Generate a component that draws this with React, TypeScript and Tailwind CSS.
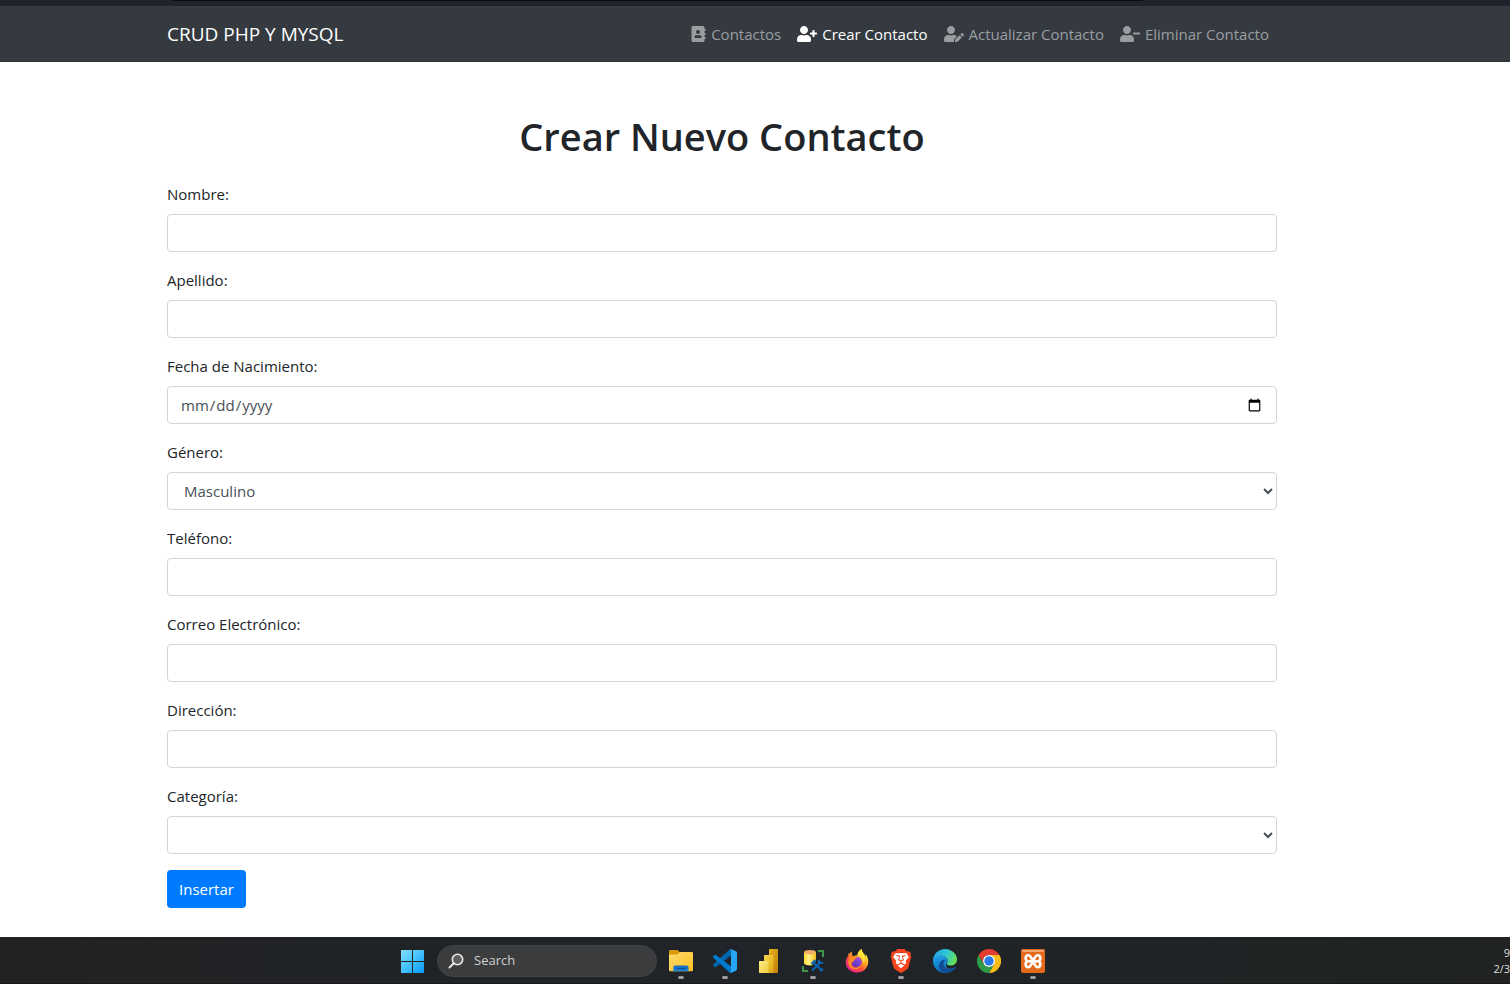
import type { ReactNode } from "react";
import { FaAddressBook, FaUserEdit, FaUserMinus, FaUserPlus } from "react-icons/fa";
import { SiBrave } from "react-icons/si";

const field =
  "block h-[38px] w-full rounded border border-[#ced4da] bg-white px-3 py-1.5 text-[15px] leading-6 text-[#495057] outline-none focus:border-[#80bdff]";

function NavItem({ icon, label, active = false }: { icon: ReactNode; label: string; active?: boolean }) {
  return (
    <a
      href="#"
      className={`flex items-center gap-[5px] whitespace-nowrap px-2 py-2 text-[15px] leading-6 ${
        active ? "text-white" : "text-[#9a9da0]"
      }`}
    >
      {icon}
      {label}
    </a>
  );
}

function Field({ id, label, children }: { id: string; label: string; children: ReactNode }) {
  return (
    <div className="mb-4">
      <label htmlFor={id} className="mb-2 block text-[15px] leading-6">
        {label}
      </label>
      {children}
    </div>
  );
}

function Task({ label, running = false, children }: { label: string; running?: boolean; children: ReactNode }) {
  return (
    <button type="button" aria-label={label} className="relative flex h-full w-11 items-center justify-center">
      {children}
      {running && <span className="absolute bottom-1 h-[3px] w-1.5 rounded-full bg-[#9c9c9c]" />}
    </button>
  );
}

function WindowsIcon() {
  return (
    <svg viewBox="0 0 23 23" className="size-[23px]">
      <defs>
        <linearGradient id="win" gradientUnits="userSpaceOnUse" x1="0" y1="0" x2="23" y2="23">
          <stop offset="0" stopColor="#83dfff" />
          <stop offset=".5" stopColor="#43c2fb" />
          <stop offset="1" stopColor="#0898fb" />
        </linearGradient>
      </defs>
      <path fill="url(#win)" d="M0 0h11v11H0zM12 0h11v11H12zM0 12h11v11H0zM12 12h11v11H12z" />
    </svg>
  );
}

function FolderIcon() {
  return (
    <svg viewBox="0 0 24 24" className="size-6">
      <defs>
        <linearGradient id="folder" x1="0" y1="0" x2="1" y2="1">
          <stop offset="0" stopColor="#ffdc70" />
          <stop offset="1" stopColor="#fdbf22" />
        </linearGradient>
        <linearGradient id="tray" x1="0" y1="0" x2="0" y2="1">
          <stop offset="0" stopColor="#0f6cbd" />
          <stop offset="1" stopColor="#1c87da" />
        </linearGradient>
      </defs>
      <path fill="#d99a06" d="M0 6V2.2Q0 1 1.2 1h7.2q.6 0 1 .5L11 4v3H0z" />
      <path fill="url(#folder)" d="M0 5.4h7.6q.8 0 1.3-.5L10.3 3.4Q10.7 3 11.4 3H22.8q1.2 0 1.2 1.2V21q0 1.2-1.2 1.2H1.2Q0 22.2 0 21z" />
      <path fill="url(#tray)" d="M4.3 22.2v-3.7q0-2 2-2h11.2q2 0 2 2v3.7z" />
      <path fill="#0b4f94" d="M7.5 19h9v1.200h-9z" />
    </svg>
  );
}

function CodeIcon() {
  return (
    <svg viewBox="0 0 128 128" className="size-6">
      <path fill="#0065a9" d="M123.471 13.820L97.097 1.120A7.973 7.973 0 0 0 88 2.668L1.662 81.387a5.333 5.333 0 0 0 .006 7.887l7.052 6.411a5.333 5.333 0 0 0 6.811.303l103.971-78.875c3.488-2.646 8.498-.158 8.498 4.220v-.306a8.001 8.001 0 0 0-4.529-7.208z" />
      <path fill="#007acc" d="M123.471 114.181l-26.374 12.698A7.973 7.973 0 0 1 88 125.333L1.662 46.613a5.333 5.333 0 0 1 .006-7.887l7.052-6.411a5.333 5.333 0 0 1 6.811-.303l103.971 78.874c3.488 2.647 8.498.159 8.498-4.219v.306a8.001 8.001 0 0 1-4.529 7.208z" />
      <path fill="#27a5f3" d="M97.098 126.882A7.977 7.977 0 0 1 88 125.333c2.952 2.952 8 .861 8-3.314V5.980c0-4.175-5.048-6.266-8-3.313a7.977 7.977 0 0 1 9.098-1.549L123.467 13.800A8 8 0 0 1 128 21.010v85.982a8 8 0 0 1-4.533 7.210l-26.369 12.681z" />
    </svg>
  );
}

function ChartIcon() {
  return (
    <svg viewBox="0 0 24 24" className="size-6">
      <defs>
        <linearGradient id="barA" x1="0" y1="0" x2="1" y2="1">
          <stop offset="0" stopColor="#e8b41c" />
          <stop offset="1" stopColor="#c37d0a" />
        </linearGradient>
        <linearGradient id="barB" x1="0" y1="0" x2="1" y2="1">
          <stop offset="0" stopColor="#f8da4a" />
          <stop offset="1" stopColor="#dfa515" />
        </linearGradient>
        <linearGradient id="barC" x1="0" y1="0" x2="1" y2="1">
          <stop offset="0" stopColor="#fceb85" />
          <stop offset="1" stopColor="#f2cc3d" />
        </linearGradient>
      </defs>
      <rect x="12" y="0" width="9" height="24" rx=".6" fill="url(#barA)" />
      <path fill="url(#barB)" d="M7 6.600q0-.6.600-.6h8.200q.6 0 .6.600V24H7z" />
      <path fill="url(#barC)" d="M2 12.600q0-.6.600-.6h8.200q.6 0 .6.600V24h-8.800Q2 24 2 23.400z" />
    </svg>
  );
}

function DatabaseIcon() {
  return (
    <svg viewBox="0 0 24 24" className="size-6">
      <defs>
        <linearGradient id="cyl" x1="0" y1="0" x2="1" y2="0">
          <stop offset="0" stopColor="#ffd92e" />
          <stop offset=".4" stopColor="#fff08a" />
          <stop offset="1" stopColor="#f3bd16" />
        </linearGradient>
      </defs>
      <path fill="none" stroke="#3f9548" strokeWidth="2" d="M17 2h5v6M2 17v5h5" />
      <path fill="url(#cyl)" d="M3 3v11c0 3.200 12 3.200 12 0V3z" />
      <ellipse cx="9" cy="3.200" rx="6" ry="2.300" fill="#f0ad63" />
      <path stroke="#222423" strokeWidth="4" d="m12 13 9 9M20 13l-8 9" />
      <path stroke="#0c66b4" strokeWidth="2" d="m12 13 9 8.500M20 13l-9 8.500" />
      <path fill="none" stroke="#0c66b4" strokeWidth="2.200" d="m10.500 15 4-4M18 11v3h4M19 22l3-2" />
    </svg>
  );
}

function FirefoxIcon() {
  return (
    <svg viewBox="0 0 24 24" className="size-6">
      <defs>
        <linearGradient id="fox" x1=".85" y1=".1" x2=".2" y2=".95">
          <stop offset="0" stopColor="#fff44f" />
          <stop offset=".35" stopColor="#ffad20" />
          <stop offset=".65" stopColor="#ff4a3d" />
          <stop offset="1" stopColor="#e81b95" />
        </linearGradient>
        <linearGradient id="globe" x1=".8" y1="0" x2=".2" y2="1">
          <stop offset="0" stopColor="#a24be8" />
          <stop offset="1" stopColor="#5831b5" />
        </linearGradient>
      </defs>
      <path fill="url(#fox)" d="M3.300 3.500C2.900 4.600 3 5.800 3.400 6.800 1.600 8.800.7 11 .7 13.200.7 19.200 5.600 23.600 12 23.600s11.300-4.600 11.300-11c0-3.300-1.300-6-3.200-7.500.5 1 .7 2 .8 2.800C19.500 4.800 17 3.500 16.500 0c-2.800 1.600-4 4.300-4 6.200-1.500 0-3 .4-4 1.200C6.200 6.200 6.500 4 7.200 2.500 5.600 3.200 4.600 4.400 4 5.200 3.500 4.800 3.300 4.200 3.300 3.500z" />
      <circle cx="11.500" cy="13" r="5.300" fill="url(#globe)" />
      <path fill="#ff8b22" d="M5.100 7.200c1.500-.6 3.100-.3 4.300.5.800.5 1.500.5 2.700.5-.2 1.300-1.500 2-3 2.500.2 1.700-1.400 2-2.500 3.300-.6 3.200 2 5.300 5 4.800 2.800-.4 4.800-2.800 5-5.500.6 4-2.400 7.300-6.300 7.300-4.400 0-7.300-3.600-6.900-8 .2-2.200.7-4 1.700-5.400z" />
      <path fill="#ffe43b" d="M16.500 0c-2.800 1.600-4 4.300-4 6.200 3.500.2 6.300 3.600 5.300 8 2.400-1.400 3-5.400 1-8.500C17.700 4 16.800 2.500 16.500 0z" />
    </svg>
  );
}

function EdgeIcon() {
  return (
    <svg viewBox="0 0 24 24" className="size-6">
      <defs>
        <linearGradient id="edgeTop" x1="0" y1=".3" x2="1" y2=".6">
          <stop offset="0" stopColor="#259fe5" />
          <stop offset=".5" stopColor="#2fc6d3" />
          <stop offset="1" stopColor="#69e34f" />
        </linearGradient>
        <linearGradient id="edgeLeft" x1="0" y1="0" x2=".3" y2="1">
          <stop offset="0" stopColor="#22a5e5" />
          <stop offset="1" stopColor="#096cc0" />
        </linearGradient>
      </defs>
      <path fill="url(#edgeLeft)" d="M0 12C0 8.500 3 6.500 7 6.500c5 0 8 3 7.500 6.500 0 0-2 1-1.500 3.500 1 4 5.500 4 9.500 1.500.4-.2.700.1.500.5C20.600 22 16.500 24 12 24 5.400 24 0 18.600 0 12z" />
      <path fill="#104c91" d="M8.900 22.600C5.800 20.700 5 16.500 7 13.500c1.200-1.900 3.300-3 5.500-2.600-1.400.8-2 2-2 3.500 0 3.200 3.300 5.600 7 5.600 1.800 0 3.500-.8 5-2 .3-.2.700.1.500.5-3 4.500-8.500 6.700-14.100 4.100z" />
      <path fill="url(#edgeTop)" d="M0 11.800C.2 5 5.400 0 12 0c7 0 12 5.200 12 10.500 0 3.600-2.600 6-6 6-2.600 0-4.400-.8-4.400-1.800 0-.7 1.100-1 1.100-3C14.700 9 11.500 6.700 7.700 6.700 3.900 6.700 1 8.800 0 11.800z" />
    </svg>
  );
}

function ChromeIcon() {
  return (
    <svg viewBox="0 0 24 24" className="size-6">
      <path fill="#fbbc1a" d="M12 6h10.400A12 12 0 0 1 12 24l5.200-9z" />
      <path fill="#2d9b48" d="M1.600 6 6.800 15A6 6 0 0 0 17.200 15L12 24A12 12 0 0 1 1.600 6z" />
      <path fill="#e33b2e" d="M1.600 6a12 12 0 0 1 20.800 0H12a6 6 0 0 0-5.200 9z" />
      <circle cx="12" cy="12" r="6" fill="#fff" />
      <circle cx="12" cy="12" r="4.700" fill="#2878ea" />
    </svg>
  );
}

function BraveIcon() {
  return (
    <span className="relative flex size-6 items-center justify-center">
      <svg viewBox="0 0 24 24" className="absolute size-6">
        <path fill="#fff" d="M6 4h12l2 4-3 12-5 3-5-3L4 8z" />
      </svg>
      <SiBrave className="relative size-6 text-[#f4431d]" />
    </span>
  );
}

function XamppIcon() {
  return (
    <svg viewBox="0 0 24 24" className="size-6">
      <rect width="24" height="24" rx="2" fill="#e5691c" />
      <rect x="1" y="1" width="22" height="2" rx="1" fill="#f3a571" />
      <path
        fill="none"
        stroke="#fff"
        strokeWidth="2.600"
        strokeLinecap="round"
        strokeLinejoin="round"
        d="M6.500 12.200C3.800 11 4 6.200 7.400 6.200c3 0 2 4 4.600 4s1.600-4 4.600-4c3.400 0 3.600 4.800.9 6 2.700 1.200 2.500 6-.9 6-3 0-2-4-4.600-4s-1.600 4-4.600 4c-3.400 0-3.600-4.800-.9-6z"
      />
      <path stroke="#fff" strokeWidth="3" strokeLinecap="round" d="M8.500 12.200h7" />
    </svg>
  );
}

export default function App() {
  return (
    <div className="flex min-h-screen flex-col overflow-x-hidden bg-white font-['Open_Sans','Noto_Sans',sans-serif] text-[#212529]">
      <div className="h-1.5 bg-[#20232b] pr-[367px] pl-[173px]">
        <div className="h-px bg-[#090a0e]" />
      </div>
      <header className="border-b border-[#2e3237] bg-[#343a40] pr-[233px] pl-[167px]">
        <nav className="flex h-[55px] items-center justify-between">
          <a href="#" className="text-[19px] leading-[30px] whitespace-nowrap text-white">
            CRUD PHP Y MYSQL
          </a>
          <div className="flex">
            <NavItem icon={<FaAddressBook className="h-4 w-[15px]" />} label="Contactos" />
            <NavItem icon={<FaUserPlus className="h-4 w-5" />} label="Crear Contacto" active />
            <NavItem icon={<FaUserEdit className="h-4 w-5" />} label="Actualizar Contacto" />
            <NavItem icon={<FaUserMinus className="h-4 w-5" />} label="Eliminar Contacto" />
          </div>
        </nav>
      </header>

      <main className="pt-[50px] pr-[233px] pb-7 pl-[167px]">
        <h1 className="mb-[22px] text-center text-[38px] leading-12 font-semibold">Crear Nuevo Contacto</h1>
        <form onSubmit={(event) => event.preventDefault()}>
          <Field id="nombre" label="Nombre:">
            <input id="nombre" type="text" className={field} />
          </Field>
          <Field id="apellido" label="Apellido:">
            <input id="apellido" type="text" className={field} />
          </Field>
          <Field id="fecha" label="Fecha de Nacimiento:">
            <input id="fecha" type="date" className={field} />
          </Field>
          <Field id="genero" label="Género:">
            <select id="genero" className={field}>
              <option>Masculino</option>
              <option>Femenino</option>
            </select>
          </Field>
          <Field id="telefono" label="Teléfono:">
            <input id="telefono" type="tel" className={field} />
          </Field>
          <Field id="correo" label="Correo Electrónico:">
            <input id="correo" type="email" className={field} />
          </Field>
          <Field id="direccion" label="Dirección:">
            <input id="direccion" type="text" className={field} />
          </Field>
          <Field id="categoria" label="Categoría:">
            <select id="categoria" className={field} />
          </Field>
          <button type="submit" className="h-[38px] rounded bg-[#007bff] px-3 text-[15px] leading-6 text-white">
            Insertar
          </button>
        </form>
      </main>

      <footer className="mt-auto flex h-[47px] items-center border-b border-[#1b1718] bg-linear-to-r from-[#212223] via-[#202429] to-[#202322] pt-0.5 pl-[401px]">
        <button type="button" aria-label="Inicio">
          <WindowsIcon />
        </button>
        <label className="mr-0.5 ml-[13px] flex h-8 w-[220px] shrink-0 items-center gap-2.5 rounded-full border border-[#404244] bg-[#3a3c3e] px-2.5">
          <svg viewBox="0 0 16 16" className="size-4 shrink-0">
            <circle cx="9.500" cy="6.500" r="5.200" fill="#5b5d5f" stroke="#e6e6e6" strokeWidth="1.600" />
            <path stroke="#e6e6e6" strokeWidth="2" strokeLinecap="round" d="M5.500 10.500 1.500 14.500" />
          </svg>
          <input
            type="search"
            aria-label="Search"
            placeholder="Search"
            className="w-full min-w-0 bg-transparent text-[13px] text-white outline-none placeholder:text-[#cfcfcf]"
          />
        </label>
        <Task label="Explorador de archivos" running>
          <FolderIcon />
        </Task>
        <Task label="Visual Studio Code" running>
          <CodeIcon />
        </Task>
        <Task label="Power BI">
          <ChartIcon />
        </Task>
        <Task label="Base de datos" running>
          <DatabaseIcon />
        </Task>
        <Task label="Firefox">
          <FirefoxIcon />
        </Task>
        <Task label="Brave" running>
          <BraveIcon />
        </Task>
        <Task label="Edge">
          <EdgeIcon />
        </Task>
        <Task label="Chrome">
          <ChromeIcon />
        </Task>
        <Task label="XAMPP" running>
          <XamppIcon />
        </Task>
        <div className="ml-auto text-right text-[11px] leading-4 text-[#dedede]">
          <div>9</div>
          <div>2/3</div>
        </div>
      </footer>
    </div>
  );
}
